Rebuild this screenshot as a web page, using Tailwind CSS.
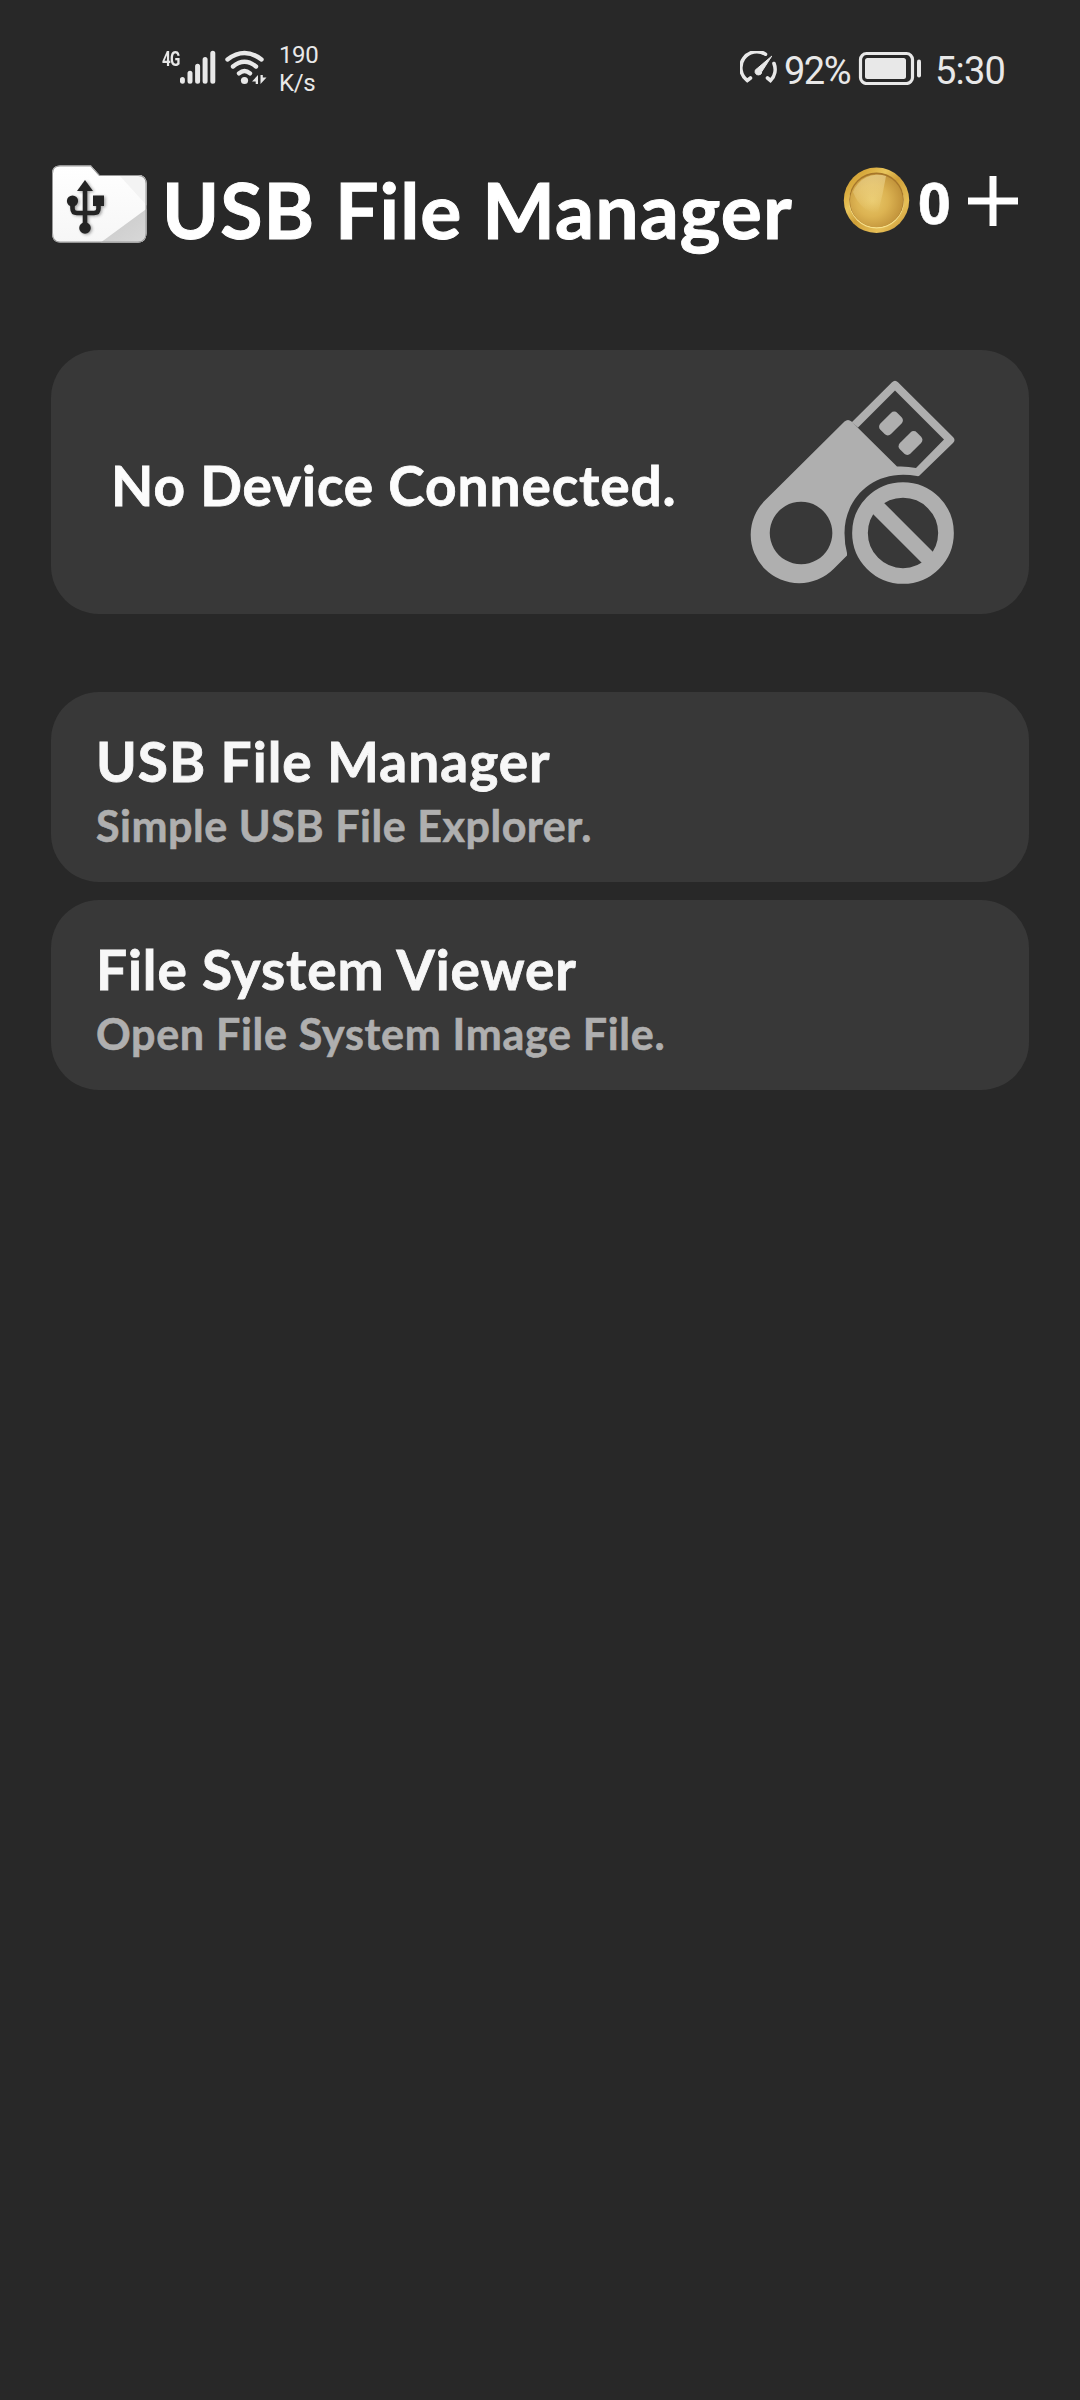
<!DOCTYPE html>
<html lang="en">
<head>
    <meta charset="UTF-8">
    <meta name="viewport" content="width=device-width, initial-scale=1.0">
    <title>USB File Manager</title>
    <script src="https://cdn.jsdelivr.net/npm/@tailwindcss/browser@4"></script>
</head>
<body class="w-[1080px] h-[2400px] overflow-hidden bg-[#282828] text-white font-['Lato',sans-serif] font-bold">

    <!-- Status Bar -->
    <div class="h-[150px] flex items-start justify-between pt-[38px] pl-[160px] pr-[75px] font-['Roboto',sans-serif] font-normal text-[#e8e8e8]">
        <div class="flex items-start">
            <div class="w-[20px] mt-[11px] text-[20px] leading-5 font-bold tracking-tighter"><span class="inline-block origin-left scale-x-[.76] ml-[2px]">4G</span></div>
            <!-- Signal -->
            <svg class="w-[36px] h-[34px] mt-[12px]" viewBox="0 0 36 34" stroke="#e8e8e8" stroke-width="5" stroke-linecap="round">
                <path d="M2.4 31.2v-1.6M10 31.2v-8M17.6 31.2v-15M25.1 31.2v-21.8M32.8 31.2v-28" />
            </svg>
            <!-- Wifi -->
            <svg class="w-[44px] h-[36px] ml-[8px] mt-[12px]" viewBox="0 0 44 36" fill="none" stroke="#e8e8e8" stroke-width="4.4" stroke-linecap="round">
                <path d="M3.5 9.5Q20.5-3.5 37.500 9.500M9 16.500Q20.500 7 32 16.500M15 23.300Q20.500 18.600 26 23.300" />
                <circle cx="20.500" cy="30.500" r="3.600" fill="#e8e8e8" stroke="none" />
                <path d="M34 34v-9l-6 6.500h3.700v2.500zM36.500 25v9l6-6.500h-3.700v-2.500z" fill="#e8e8e8" stroke="none" />
            </svg>
            <div class="ml-[11px] mt-[3px] text-[24px] leading-[28px] tracking-[-0.4px]">190<br>K/s</div>
        </div>
        <div class="flex items-start">
            <!-- Speed gauge -->
            <svg class="w-[38px] h-[34px] mt-[13px]" viewBox="0 0 38 34" fill="none" stroke="#e8e8e8" stroke-width="3.600" stroke-linecap="round">
                <path d="M25.500 3.200A16 16 0 0 0 7.300 29.500L10.500 27M34 12.500A16 16 0 0 1 30.500 29.500L27.500 27" />
                <path d="M31.500 5.500L21.800 20.500A3.400 3.400 0 1 1 17 17.500Z" fill="#e8e8e8" stroke-width="1" />
            </svg>
            <div class="w-[73px] ml-[6px] mt-[14px] text-[38px] leading-[38px] tracking-[-1.5px]">92%</div>
            <!-- Battery -->
            <svg class="w-[64px] h-[34px] ml-[1px] mt-[13px]" viewBox="0 0 64 34">
                <rect x="2.500" y="2.500" width="52" height="30" rx="6" fill="none" stroke="#e8e8e8" stroke-width="3.200" />
                <rect x="7" y="7" width="41" height="21" rx="2.500" fill="#e8e8e8" />
                <rect x="59" y="8.500" width="4" height="18" rx="2" fill="#e8e8e8" />
            </svg>
            <div class="ml-[13px] mt-[14px] text-[38px] leading-[38px] tracking-[-0.800px]">5:30</div>
        </div>
    </div>

    <!-- Header -->
    <div class="h-[200px] flex items-start pl-[51px]">
        <svg class="w-[98px] h-[80px] mt-[14px]" viewBox="0 0 98 80">
            <defs>
                <linearGradient id="folder" x1="0" y1="0" x2="0" y2="1">
                    <stop offset="0" stop-color="#fff" />
                    <stop offset="1" stop-color="#f6f6f6" />
                </linearGradient>
                <linearGradient id="fold" x1="0" y1="0" x2="1" y2="1">
                    <stop offset="0" stop-color="#c8c8c8" />
                    <stop offset="1" stop-color="#d8d8d8" />
                </linearGradient>
                <filter id="shadow" x="-30%" y="-30%" width="160%" height="160%">
                    <feGaussianBlur stdDeviation="1.600" />
                </filter>
                <clipPath id="shape">
                    <path d="M9 1.500H40L48.500 11H87Q95.500 11 95.500 19.500V69Q95.500 78.500 87 78.500H9Q1 78.500 1 69V9.500Q1 1.500 9 1.500Z" />
                </clipPath>
                <g id="usb">
                    <circle cx="34" cy="64" r="5.800" />
                    <circle cx="21.500" cy="37" r="5.600" />
                    <rect x="42" y="31.500" width="11" height="10.500" />
                    <path d="M34 16L42 27H26Z" />
                    <path d="M34 24V62M21.500 37V44.500Q21.500 49 26 49H43Q47.500 49 47.500 44.500V38" fill="none" stroke="#242424" stroke-width="4.600" />
                </g>
            </defs>
            <g clip-path="url(#shape)">
                <rect width="98" height="80" fill="url(#folder)" />
                <path d="M68 11L98 44V11Z" fill="#f3f3f3" />
                <path d="M98 43L49 79H98Z" fill="url(#fold)" />
                <path d="M9 1.500H40L48.500 11H87Q95.500 11 95.500 19.500V69Q95.500 78.500 87 78.500H9Q1 78.500 1 69V9.500Q1 1.500 9 1.500Z" fill="none" stroke="#999" stroke-width="2" />
            </g>
            <use href="#usb" transform="translate(1.500 1)" fill="#242424" opacity=".4" filter="url(#shadow)" />
            <use href="#usb" fill="#242424" />
        </svg>
        <h1 class="w-[680px] ml-[13px] mt-[19px] text-[77px] leading-[80px] tracking-[1.05px] whitespace-nowrap [-webkit-text-stroke:1px_#fff]">USB File Manager</h1>
        <!-- Coin -->
        <svg class="w-[68px] h-[68px] ml-[1px] mt-[16px]" viewBox="0 0 68 68">
            <defs>
                <linearGradient id="rim" x1="0" y1="0" x2="1" y2="1">
                    <stop offset="0" stop-color="#c4952f" />
                    <stop offset=".2" stop-color="#d9ab3e" />
                    <stop offset=".35" stop-color="#e8c55c" />
                    <stop offset=".5" stop-color="#cf9f38" />
                    <stop offset=".75" stop-color="#e6bf57" />
                    <stop offset="1" stop-color="#c08a2b" />
                </linearGradient>
                <radialGradient id="face" cx=".42" cy=".5" r=".6">
                    <stop offset="0" stop-color="#e8c768" />
                    <stop offset=".5" stop-color="#dcb352" />
                    <stop offset="1" stop-color="#bf9038" />
                </radialGradient>
                <linearGradient id="shine" x1="0" y1="0" x2="0" y2="1">
                    <stop offset="0" stop-color="#fff3bd" stop-opacity=".45" />
                    <stop offset="1" stop-color="#fff3bd" stop-opacity="0" />
                </linearGradient>
            </defs>
            <circle cx="33.500" cy="34.300" r="32.700" fill="url(#rim)" />
            <circle cx="33.500" cy="35" r="27.500" fill="#f6e08a" />
            <circle cx="33.500" cy="33.800" r="27.300" fill="#a6762a" />
            <circle cx="33.500" cy="34.800" r="26.500" fill="url(#face)" />
            <path d="M43 10A26.500 26.500 0 0 0 10 26Q18 46 35 47Q40 28 43 10Z" fill="url(#shine)" />
        </svg>
        <span class="w-[33px] ml-[7px] mt-[22px] text-[57px] leading-[60px] font-['Noto_Sans',sans-serif] [-webkit-text-stroke:0.6px_#fff]">0</span>
        <svg class="w-[50px] h-[50px] ml-[17px] mt-[26px]" viewBox="0 0 50 50" stroke="#fff" stroke-width="7">
            <path d="M25 0v50M0 25h50" />
        </svg>
    </div>

    <!-- Device Card -->
    <div class="mx-[51px] h-[264px] rounded-[48px] bg-[#383838] flex items-center justify-between pl-[60px] pr-[74px]">
        <h2 class="mt-[6px] text-[55px] leading-[60px] tracking-[0.9px] text-[#fcfcfc] whitespace-nowrap [-webkit-text-stroke:0.8px_#fcfcfc]">No Device Connected.</h2>
        <svg class="w-[206px] h-[206px]" viewBox="-1 -1 206 206" fill="#afafaf">
            <!-- Stick body -->
            <path fill-rule="evenodd" d="M94.500 41.500Q98 38.500 101.500 41.500L147 86.500Q157 86 166 88L194 59.500L145 10.500L108 47.500L102 42L142 2.200Q145 -.8 148 2.200L203 57Q206 60 203 63L169.500 95.500Q168.500 96.500 167 96C124 88 94.500 118 94.500 153Q94.500 164 97 173V175.500L83.500 189.100A48.500 48.500 0 0 1 14.900 120.500Z M51 121.700a31.300 31.300 0 1 0 .1 0Z" />
            <rect x="-7.500" y="-12" width="15" height="24" rx="4.500" transform="translate(141 43.500) rotate(45)" />
            <rect x="-7.500" y="-12" width="15" height="24" rx="4.500" transform="translate(160.500 63) rotate(45)" />
            <!-- Blocked sign -->
            <circle cx="153" cy="153" r="43" fill="none" stroke="#afafaf" stroke-width="15.700" />
            <path d="M125 125L181 181" stroke="#afafaf" stroke-width="15.700" />
        </svg>
    </div>

    <!-- Menu -->
    <div class="mx-[51px] mt-[78px] flex flex-col gap-[18px]">
        <div class="h-[190px] rounded-[48px] bg-[#383838] pl-[45px] pt-[39px]">
            <h3 class="text-[55px] leading-[60px] tracking-[1px] text-[#f7f7f7] whitespace-nowrap [-webkit-text-stroke:0.8px_#f7f7f7]">USB File Manager</h3>
            <p class="mt-[9px] text-[43px] leading-[52px] tracking-[0.54px] text-[#afafaf] whitespace-nowrap [-webkit-text-stroke:0.6px_#afafaf]">Simple USB File Explorer.</p>
        </div>
        <div class="h-[190px] rounded-[48px] bg-[#383838] pl-[45px] pt-[39px]">
            <h3 class="text-[55px] leading-[60px] tracking-[0.9px] text-[#f7f7f7] whitespace-nowrap [-webkit-text-stroke:0.8px_#f7f7f7]">File System Viewer</h3>
            <p class="mt-[9px] text-[43px] leading-[52px] tracking-[0.7px] text-[#afafaf] whitespace-nowrap [-webkit-text-stroke:0.6px_#afafaf]">Open File System Image File.</p>
        </div>
    </div>

</body>
</html>
